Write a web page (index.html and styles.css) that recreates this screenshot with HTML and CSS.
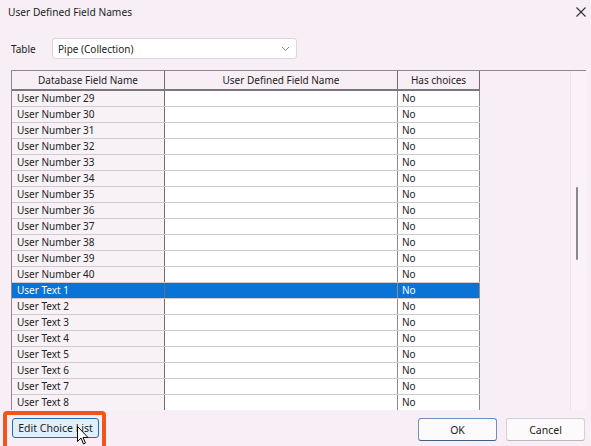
FILE: index.html
```html
<!DOCTYPE html>
<html lang="en">
<head>
  <meta charset="UTF-8">
  <title>User Defined Field Names</title>
  <link rel="stylesheet" href="styles.css">
</head>
<body>

<div class="dialog">
  <div class="titlebar">
    <span class="title">User Defined Field Names</span>
    <svg class="close" width="10" height="10" viewBox="0 0 10 10">
      <path d="M0.5 0.5 L9.5 9.5 M9.5 0.5 L0.5 9.5" stroke="#333" stroke-width="1.1" fill="none"/>
    </svg>
  </div>

  <div class="picker">
    <span class="picker-label">Table</span>
    <div class="combo">
      <span>Pipe (Collection)</span>
      <svg width="9" height="6" viewBox="0 0 9 6">
        <path d="M1 1 L4.5 4.5 L8 1" stroke="#888" stroke-width="1" fill="none"/>
      </svg>
    </div>
  </div>

  <div class="grid">
    <div class="grid-body">
      <table>
        <thead>
          <tr>
            <th class="col-db">Database Field Name</th>
            <th class="col-user">User Defined Field Name</th>
            <th class="col-choice">Has choices</th>
          </tr>
        </thead>
        <tbody>
          <tr><td>User Number 29</td><td></td><td>No</td></tr>
          <tr><td>User Number 30</td><td></td><td>No</td></tr>
          <tr><td>User Number 31</td><td></td><td>No</td></tr>
          <tr><td>User Number 32</td><td></td><td>No</td></tr>
          <tr><td>User Number 33</td><td></td><td>No</td></tr>
          <tr><td>User Number 34</td><td></td><td>No</td></tr>
          <tr><td>User Number 35</td><td></td><td>No</td></tr>
          <tr><td>User Number 36</td><td></td><td>No</td></tr>
          <tr><td>User Number 37</td><td></td><td>No</td></tr>
          <tr><td>User Number 38</td><td></td><td>No</td></tr>
          <tr><td>User Number 39</td><td></td><td>No</td></tr>
          <tr><td>User Number 40</td><td></td><td>No</td></tr>
          <tr class="selected"><td>User Text 1</td><td></td><td>No</td></tr>
          <tr><td>User Text 2</td><td></td><td>No</td></tr>
          <tr><td>User Text 3</td><td></td><td>No</td></tr>
          <tr><td>User Text 4</td><td></td><td>No</td></tr>
          <tr><td>User Text 5</td><td></td><td>No</td></tr>
          <tr><td>User Text 6</td><td></td><td>No</td></tr>
          <tr><td>User Text 7</td><td></td><td>No</td></tr>
          <tr><td>User Text 8</td><td></td><td>No</td></tr>
        </tbody>
      </table>
    </div>
    <div class="vscroll"><div class="thumb"></div></div>
  </div>

  <div class="buttons">
    <div class="highlight">
      <button class="btn btn-edit">Edit Choice List</button>
    </div>
    <button class="btn btn-ok">OK</button>
    <button class="btn btn-cancel">Cancel</button>
  </div>

  <!-- mouse pointer over the edit button -->
  <svg class="pointer" width="12" height="19" viewBox="0 0 12 19">
    <path d="M0.5 0.5 L0.5 15.5 L4 12 L6.5 18 L8.5 17 L6 11.5 L11 11.5 Z" fill="#fff" stroke="#000" stroke-width="1"/>
  </svg>
</div>

</body>
</html>
```

FILE: styles.css
```css
html, body {
  margin: 0;
  padding: 0;
}

body {
  width: 591px;
  height: 446px;
  overflow: hidden;
  background: #f7eff5;
  font-family: "Noto Sans", "Open Sans", sans-serif;
  font-size: 10px;
  color: #222;
}

.dialog {
  position: relative;
  height: 446px;
}

.titlebar {
  height: 24px;
  display: flex;
  align-items: center;
  justify-content: space-between;
  padding: 0 5px 0 8px;
}

.title {
  font-size: 10.2px;
}

.picker {
  display: flex;
  align-items: center;
  margin-top: 14px;
  padding-left: 11px;
}

.picker-label {
  width: 41px;
}

.combo {
  width: 232px;
  height: 19px;
  display: flex;
  align-items: center;
  justify-content: space-between;
  padding: 0 6px 0 5px;
  background: #fff;
  border: 1px solid #dcd5da;
  border-radius: 3px;
}

.grid {
  display: flex;
  margin: 11px 5px 0 11px;
  height: 339px;
  border-top: 1px solid #8c8a8c;
  border-left: 1px solid #8c8a8c;
  overflow: hidden;
}

.grid-body {
  flex: 1;
  background: #f7eff5;
}

table {
  border-collapse: collapse;
  table-layout: fixed;
}

th {
  height: 18px;
  padding: 0;
  font-weight: normal;
  text-align: center;
  background: #f7eff5;
  border-right: 1px solid #6f6d6f;
  border-bottom: 2px solid #7a787a;
}

.col-db { width: 152px; }
.col-user { width: 232px; }
.col-choice { width: 81px; }

td {
  height: 15px;
  padding: 0 0 0 5px;
  background: #fff;
  border-right: 1px solid #8d8b8d;
  border-bottom: 1px solid #cfcacd;
  white-space: nowrap;
  line-height: 15px;
}

td:first-child {
  background: #f8f1f6;
  border-right-color: #6f6d6f;
}

td:last-child {
  padding-left: 4px;
}

tr.selected td {
  background: #0a74d6;
  color: #fff;
}

.vscroll {
  width: 15px;
  background: #f9f3f8;
  border-left: 1px solid #ebe3e9;
  position: relative;
}

.thumb {
  position: absolute;
  left: 5px;
  top: 116px;
  width: 2px;
  height: 73px;
  background: #8b878b;
  border-radius: 1px;
}

.buttons {
  display: flex;
  align-items: flex-start;
  padding: 0 6px 0 3px;
  margin-top: 1px;
}

.highlight {
  border: 4px solid #f0561c;
  border-radius: 4px;
  padding: 3px 3px 8px 5px;
}

.btn {
  font-family: inherit;
  font-size: 10.5px;
  color: #222;
  padding: 0;
  border-radius: 3px;
}

.btn-edit {
  width: 87px;
  height: 20px;
  background: #e1eefb;
  border: 1px solid #1a6fc4;
}

.btn-ok,
.btn-cancel {
  width: 79px;
  height: 23px;
  margin-top: 7px;
  background: #fdfafc;
}

.btn-ok {
  margin-left: auto;
  border: 1px solid #6f8fb6;
  border-bottom-color: #3e5f88;
}

.btn-cancel {
  margin-left: 9px;
  border: 1px solid #d5cfd4;
  border-bottom-color: #bdb7bc;
}

.pointer {
  position: absolute;
  left: 77px;
  top: 426px;
}
```
